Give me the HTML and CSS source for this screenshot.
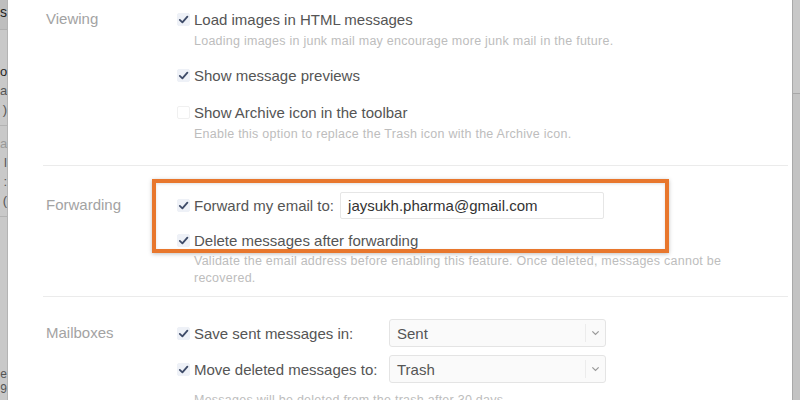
FILE: index.html
```html
<!DOCTYPE html>
<html>
<head>
<meta charset="utf-8">
<link rel="stylesheet" href="styles.css">
</head>
<body>
<div class="screen">
  <div class="bg-left">
    <div class="bgl-head">s</div>
    <div class="bgl-item">
      <div class="bgl-l1">o</div>
      <div class="bgl-l2">a</div>
      <div class="bgl-l2">)</div>
    </div>
    <div class="bgl-item">
      <div class="bgl-l3">a</div>
      <div class="bgl-l2">l</div>
      <div class="bgl-l2">:</div>
      <div class="bgl-l2">(</div>
    </div>
    <div class="bgl-item bgl-last">
      <div class="bgl-l2">e</div>
      <div class="bgl-l2">9</div>
    </div>
  </div>

  <div class="panel">
    <section class="sec sec-viewing">
      <div class="sec-label">Viewing</div>
      <div class="sec-body">
        <div class="opt">
          <span class="cb on"><svg viewBox="0 0 13 13"><path d="M2.8 6.9 L5.4 9.4 L10.4 3.6"/></svg></span>
          <span class="opt-text">Load images in HTML messages</span>
        </div>
        <div class="desc">Loading images in junk mail may encourage more junk mail in the future.</div>
        <div class="opt gap">
          <span class="cb on"><svg viewBox="0 0 13 13"><path d="M2.8 6.9 L5.4 9.4 L10.4 3.6"/></svg></span>
          <span class="opt-text">Show message previews</span>
        </div>
        <div class="opt gap">
          <span class="cb"></span>
          <span class="opt-text">Show Archive icon in the toolbar</span>
        </div>
        <div class="desc">Enable this option to replace the Trash icon with the Archive icon.</div>
      </div>
    </section>

    <section class="sec sec-forwarding">
      <div class="sec-label tall">Forwarding</div>
      <div class="sec-body">
        <div class="fwd-group">
          <div class="opt tall">
            <span class="cb on"><svg viewBox="0 0 13 13"><path d="M2.8 6.9 L5.4 9.4 L10.4 3.6"/></svg></span>
            <span class="opt-text">Forward my email to:</span>
            <span class="email">jaysukh.pharma@gmail.com</span>
          </div>
          <div class="opt gap-sm">
            <span class="cb on"><svg viewBox="0 0 13 13"><path d="M2.8 6.9 L5.4 9.4 L10.4 3.6"/></svg></span>
            <span class="opt-text">Delete messages after forwarding</span>
          </div>
          <div class="annot"></div>
        </div>
        <div class="desc desc-wide">Validate the email address before enabling this feature. Once deleted, messages cannot be recovered.</div>
      </div>
    </section>

    <section class="sec sec-mailboxes">
      <div class="sec-label tall">Mailboxes</div>
      <div class="sec-body">
        <div class="sel-row">
          <div class="opt tall">
            <span class="cb on"><svg viewBox="0 0 13 13"><path d="M2.8 6.9 L5.4 9.4 L10.4 3.6"/></svg></span>
            <span class="opt-text">Save sent messages in:</span>
          </div>
          <div class="select"><span class="sel-val">Sent</span><span class="sel-arrow"><svg viewBox="0 0 10 6"><path d="M1.5 1.2 L5 4.6 L8.5 1.2"/></svg></span></div>
        </div>
        <div class="sel-row gap-sel">
          <div class="opt tall">
            <span class="cb on"><svg viewBox="0 0 13 13"><path d="M2.8 6.9 L5.4 9.4 L10.4 3.6"/></svg></span>
            <span class="opt-text">Move deleted messages to:</span>
          </div>
          <div class="select"><span class="sel-val">Trash</span><span class="sel-arrow"><svg viewBox="0 0 10 6"><path d="M1.5 1.2 L5 4.6 L8.5 1.2"/></svg></span></div>
        </div>
        <div class="desc desc-mb">Messages will be deleted from the trash after 30 days.</div>
      </div>
    </section>
  </div>

  <div class="bg-right">
    <div class="bgr-top"></div>
  </div>
</div>
</body>
</html>
```

FILE: styles.css
```css
html, body {
  margin: 0;
  padding: 0;
  background: #ffffff;
}

body {
  font-family: "Liberation Sans", Arial, sans-serif;
  width: 800px;
  height: 400px;
  overflow: hidden;
}

.screen {
  display: flex;
  width: 800px;
  height: 400px;
  overflow: hidden;
}

/* background app strips */
.bg-left {
  width: 8px;
  flex: none;
  background: #c9c9c9;
  border-right: 1px solid #b4b4b4;
  box-sizing: border-box;
  overflow: hidden;
  font-size: 13px;
  text-align: right;
  color: #3a3a3a;
}

.bgl-head {
  height: 30px;
  line-height: 24px;
  background: #bebebe;
  border-bottom: 1px solid #b0b0b0;
  box-sizing: border-box;
  font-size: 14px;
  color: #222;
}

.bgl-item {
  padding-top: 32px;
  padding-bottom: 6px;
  border-bottom: 1px solid #b3b3b3;
  line-height: 19px;
}

.bgl-item + .bgl-item {
  padding-top: 8px;
}

.bgl-item.bgl-last {
  padding-top: 150px;
  border-bottom: none;
  font-size: 12px;
  line-height: 15px;
}

.bgl-l1 {
  color: #1f1f1f;
}

.bgl-l2 {
  color: #555;
}

.bgl-l3 {
  color: #999;
}

.bg-right {
  width: 8px;
  flex: none;
  background: #c3c3c3;
  border-left: 1px solid #a9a9a9;
  box-sizing: border-box;
}

.bgr-top {
  height: 93px;
  background: #c8c8c8;
  border-bottom: 1px solid #a7a7a7;
}

/* settings panel */
.panel {
  flex: 1;
  padding: 0 4px 0 35px;
  background: #ffffff;
  overflow: hidden;
}

.sec {
  display: grid;
  grid-template-columns: 130px 1fr;
  padding-left: 3px;
  border-bottom: 1px solid #ebebeb;
}

.sec-viewing {
  padding: 8px 0 23px 3px;
}

.sec-forwarding {
  padding: 25px 0 9px 3px;
}

.sec-mailboxes {
  padding: 22px 0 0 3px;
  border-bottom: none;
}

.sec-label {
  font-size: 15px;
  line-height: 22px;
  color: #a3a3a3;
}

.sec-label.tall {
  line-height: 28px;
}

.sec-body {
  display: flex;
  flex-direction: column;
}

.opt {
  display: flex;
  align-items: center;
  height: 22px;
  font-size: 15px;
  color: #555555;
  white-space: nowrap;
}

.opt.tall {
  height: 28px;
}

.opt.gap {
  margin-top: 15px;
}

.opt.gap-sm {
  margin-top: 10px;
}

.cb {
  width: 13px;
  height: 13px;
  margin-left: 1px;
  margin-right: 4px;
  flex: none;
  box-sizing: border-box;
  border-radius: 2px;
  background: #ffffff;
  border: 1px solid #f0f0f0;
}

.cb.on {
  background: #eef1f7;
  border-color: #eef1f7;
}

.cb svg {
  display: block;
  width: 13px;
  height: 13px;
  margin: -1px;
}

.cb svg path {
  fill: none;
  stroke: #3e4b68;
  stroke-width: 1.8;
  stroke-linecap: round;
  stroke-linejoin: round;
}

.desc {
  margin-top: 3px;
  padding-left: 18px;
  font-size: 12.5px;
  line-height: 16px;
  color: #bdbdbd;
  letter-spacing: 0.25px;
  white-space: nowrap;
}

.desc-wide {
  margin-top: 2px;
  line-height: 17px;
  width: 545px;
  white-space: normal;
}

.desc-mb {
  margin-top: 9px;
}

.email {
  margin-left: 6px;
  width: 264px;
  height: 27px;
  box-sizing: border-box;
  border: 1px solid #e6e6e6;
  border-radius: 2px;
  padding-left: 7px;
  line-height: 25px;
  color: #333333;
  background: #ffffff;
}

.fwd-group {
  position: relative;
}

.annot {
  position: absolute;
  left: -24px;
  top: -12px;
  width: 517px;
  height: 74px;
  box-sizing: border-box;
  border: 4px solid #e8772d;
  box-shadow: 0 1px 4px rgba(0, 0, 0, 0.25), inset 0 1px 3px rgba(0, 0, 0, 0.12);
}

.sel-row {
  display: grid;
  grid-template-columns: 213px 217px;
  align-items: center;
}

.sel-row.gap-sel {
  margin-top: 8px;
}

.select {
  height: 28px;
  box-sizing: border-box;
  border: 1px solid #e4e4e4;
  border-radius: 3px;
  background: #fafafa;
  display: flex;
  align-items: center;
  font-size: 15px;
  color: #555555;
}

.sel-val {
  flex: 1;
  padding-left: 7px;
}

.sel-arrow {
  width: 19px;
  height: 18px;
  border-left: 1px solid #ececec;
  display: flex;
  align-items: center;
  justify-content: center;
}

.sel-arrow svg {
  width: 9px;
  height: 6px;
}

.sel-arrow svg path {
  fill: none;
  stroke: #9a9a9a;
  stroke-width: 1.4;
}
```
